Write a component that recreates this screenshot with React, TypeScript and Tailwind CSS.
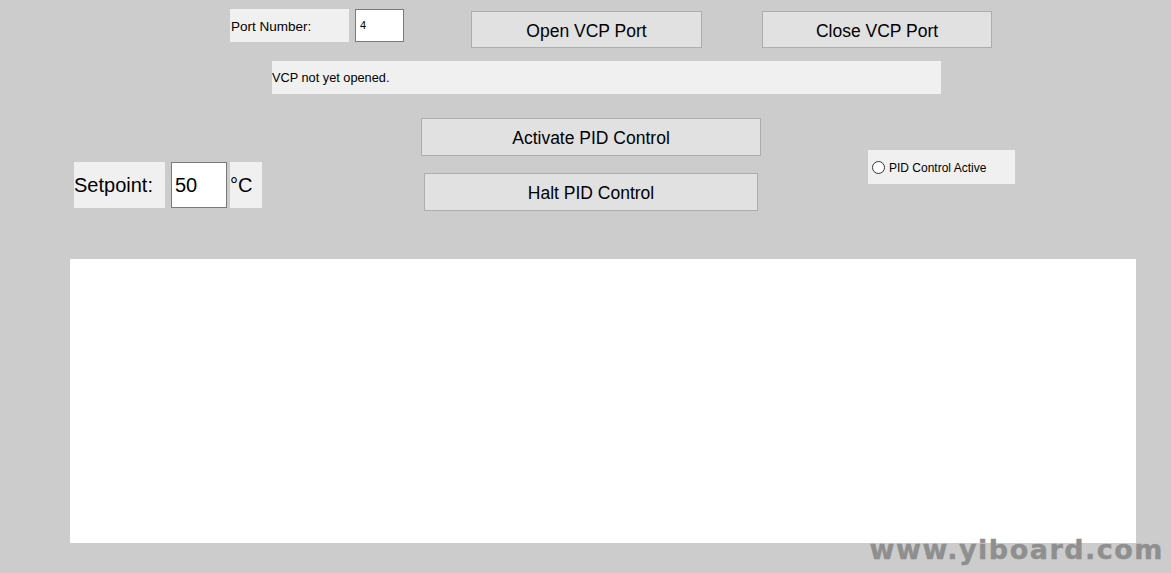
export default function App() {
  return (
    <div className="relative h-[573px] w-full overflow-hidden bg-[#cccccc] font-['Liberation_Sans',Arial,sans-serif] text-black">
      {/* Port row */}
      <div className="flex items-start pl-[230px] pt-[9px]">
        <div className="flex h-[33px] w-[119px] items-center bg-[#f0f0f0] pl-[1px] pt-[3px] text-[13.5px]">Port Number:</div>
        <div className="ml-[6px] flex h-[33px] w-[49px] items-center border border-[#7a7a7a] bg-white pl-[4px] text-[11px]">4</div>
        <button className="ml-[67px] mt-[2px] h-[37px] w-[231px] border border-[#adadad] bg-[#e1e1e1] pt-[3px] text-[17.5px]">Open VCP Port</button>
        <button className="ml-[60px] mt-[2px] h-[37px] w-[230px] border border-[#adadad] bg-[#e1e1e1] pt-[3px] text-[17.5px]">Close VCP Port</button>
      </div>

      {/* Status */}
      <div className="ml-[272px] mt-[13px] flex h-[33px] w-[669px] items-center bg-[#f0f0f0] text-[12.75px]">VCP not yet opened.</div>

      {/* Control row */}
      <div className="mt-[24px] flex items-start pl-[74px]">
        <div className="mt-[44px] flex items-stretch">
          <div className="flex h-[46px] w-[91px] items-center bg-[#f0f0f0] text-[20px]">Setpoint:</div>
          <div className="ml-[6px] flex h-[46px] w-[56px] items-center border border-[#7a7a7a] bg-white pl-[3px] text-[20px]">50</div>
          <div className="ml-[3px] flex h-[46px] w-[32px] items-center bg-[#f0f0f0] text-[20px]">°C</div>
        </div>
        <div className="ml-[159px] flex w-[340px] flex-col">
          <button className="h-[38px] w-full border border-[#adadad] bg-[#e1e1e1] pt-[2px] text-[17.5px]">Activate PID Control</button>
          <button className="mx-[3px] mt-[17px] h-[38px] border border-[#adadad] bg-[#e1e1e1] pt-[2px] text-[17.5px]">Halt PID Control</button>
        </div>
        <div className="ml-[107px] mt-[32px] flex h-[34px] w-[147px] items-center bg-[#f0f0f0] pl-[4px] pt-[1px] text-[12px]">
          <span className="mr-[4px] h-[13px] w-[13px] rounded-full border border-[#333333] bg-white" />
          PID Control Active
        </div>
      </div>

      {/* Chart area */}
      <div className="ml-[70px] mt-[48px] h-[284px] w-[1066px] bg-white" />

      <div className="absolute bottom-[3px] right-[7px] font-['DejaVu_Sans',sans-serif] text-[27px] font-bold tracking-[1.5px] text-[#8f8f8f] [-webkit-text-stroke:0.4px_#8f8f8f]">www.yiboard.com</div>
    </div>
  )
}
